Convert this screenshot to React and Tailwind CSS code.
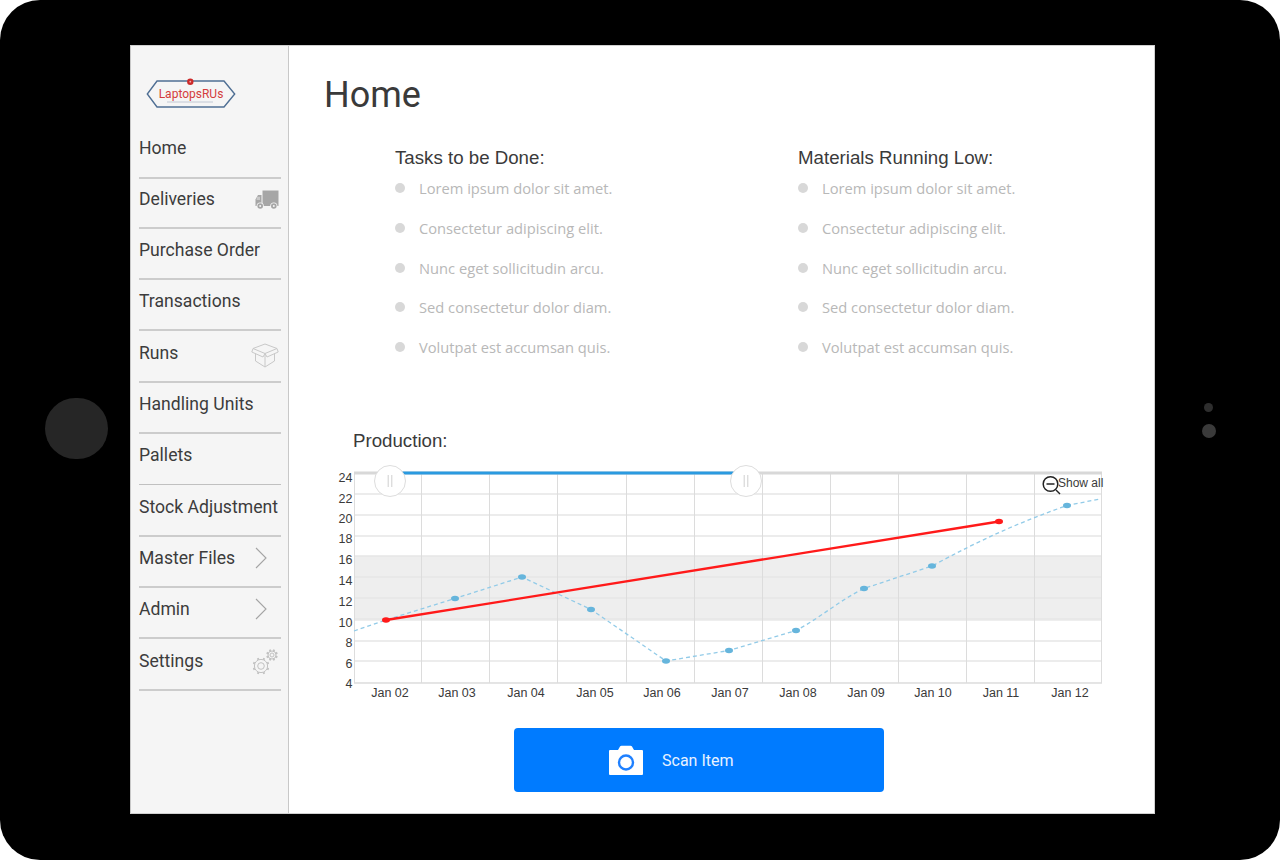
import React from "react";

const menuItems = [
  { label: "Home", h: "h-[51px]", pb: "pb-[9px]" },
  { label: "Deliveries", icon: "truck", h: "h-[50px]", pb: "pb-[7px]" },
  { label: "Purchase Order", h: "h-[51px]", pb: "pb-[7px]" },
  { label: "Transactions", h: "h-[51px]", pb: "pb-[7px]" },
  { label: "Runs", icon: "box", h: "h-[52px]", pb: "pb-[6px]" },
  { label: "Handling Units", h: "h-[51px]", pb: "pb-[7px]" },
  { label: "Pallets", h: "h-[51px]", pb: "pb-[7px]", thin: true },
  { label: "Stock Adjustment", h: "h-[52px]", pb: "pb-[6px]" },
  { label: "Master Files", icon: "chevron", h: "h-[51px]", pb: "pb-[7px]" },
  { label: "Admin", icon: "chevron", h: "h-[51px]", pb: "pb-[7px]" },
  { label: "Settings", icon: "gears", h: "h-[52px]", pb: "pb-[6px]" },
];

const lorem = [
  "Lorem ipsum dolor sit amet.",
  "Consectetur adipiscing elit.",
  "Nunc eget sollicitudin arcu.",
  "Sed consectetur dolor diam.",
  "Volutpat est accumsan quis.",
];

const Logo = () => (
  <svg width="90" height="32" viewBox="0 0 90 32" className="block">
    <path d="M11 3H78L88.7 16L78 29H11L1.3 16Z" fill="none" stroke="#4f6f94" strokeWidth="1.4" />
    <circle cx="44.3" cy="3.7" r="3.2" fill="#cc2a2a" />
    <circle cx="44.3" cy="3.7" r="0.9" fill="#f0b0b0" />
    <text x="45" y="20" textAnchor="middle" fontFamily="Roboto, sans-serif" fontSize="12" fill="#d43c3c">
      LaptopsRUs
    </text>
    <path d="M21 24H67" stroke="#b4bccb" strokeWidth="0.8" />
  </svg>
);

const TruckIcon = () => (
  <svg width="24" height="20" viewBox="0 0 24 20" className="block mt-[1px]">
    <path d="M7.5 0.5H23.5V16H7.5Z" fill="#a6a6a6" />
    <path d="M6.5 5H3L0.5 9.5V16H6.5Z" fill="#a6a6a6" />
    <path d="M2 6.8H5V10H1.5Z" fill="#c8c8c8" />
    <circle cx="5.2" cy="16" r="3.6" fill="#f5f5f5" />
    <circle cx="18.8" cy="16" r="3.6" fill="#f5f5f5" />
    <circle cx="5.2" cy="16" r="2.8" fill="#a6a6a6" />
    <circle cx="18.8" cy="16" r="2.8" fill="#a6a6a6" />
    <circle cx="5.2" cy="16" r="1" fill="#f5f5f5" />
    <circle cx="18.8" cy="16" r="1" fill="#f5f5f5" />
  </svg>
);

const BoxIcon = () => (
  <svg width="28" height="25" viewBox="0 0 28 25" fill="none" stroke="#c8c8c8" strokeWidth="1" className="block mt-[4px]">
    <path d="M14 1L26 5.5L14 10.5L2 5.5Z" />
    <path d="M2 5.5L0.8 9L12 14L14 10.5L16 14L27.2 9L26 5.5" />
    <path d="M4.5 10.5V18L14 24L23.5 18V10.5" />
    <path d="M14 10.5V24" />
  </svg>
);

const ChevronIcon = () => (
  <svg width="12" height="22" viewBox="0 0 12 22" fill="none" stroke="#a4a4a4" strokeWidth="1.1" className="block mr-[12px]">
    <path d="M1 1L11 11L1 21" />
  </svg>
);

const GearShape = ({ cx, cy, r, teeth = 8 }) => {
  const spokes = [];
  for (let i = 0; i < teeth; i++) {
    const a = (i / teeth) * Math.PI * 2 + Math.PI / 8;
    spokes.push(
      <line
        key={i}
        x1={cx + Math.cos(a) * r}
        y1={cy + Math.sin(a) * r}
        x2={cx + Math.cos(a) * (r + 1.8)}
        y2={cy + Math.sin(a) * (r + 1.8)}
        strokeWidth="2"
      />
    );
  }
  return (
    <g>
      <circle cx={cx} cy={cy} r={r} />
      <circle cx={cx} cy={cy} r={r * 0.5} />
      {spokes}
    </g>
  );
};

const GearsIcon = () => (
  <svg width="27" height="27" viewBox="0 0 27 27" fill="none" stroke="#c2c2c2" strokeWidth="1" className="block mt-[3px]">
    <GearShape cx={9} cy={17} r={6.6} />
    <GearShape cx={20} cy={6} r={4} />
  </svg>
);

const MenuIcon = ({ type }) => {
  if (type === "truck") return <TruckIcon />;
  if (type === "box") return <BoxIcon />;
  if (type === "gears") return <GearsIcon />;
  if (type === "chevron") return <ChevronIcon />;
  return null;
};

const ySteps = [24, 22, 20, 18, 16, 14, 12, 10, 8, 6, 4];
const gridYs = [473, 494, 515, 536, 556, 577, 598, 619, 641, 661, 683];
// the axis numbers don't sit exactly on their grid lines
const labelYs = [477, 498, 518, 538, 559, 580, 601, 622, 642, 663, 683];
const gridXs = [421, 489, 557, 626, 694, 762, 830, 898, 966, 1034];
const xLabels = [
  ["Jan 02", 390],
  ["Jan 03", 457],
  ["Jan 04", 526],
  ["Jan 05", 595],
  ["Jan 06", 662],
  ["Jan 07", 730],
  ["Jan 08", 798],
  ["Jan 09", 866],
  ["Jan 10", 933],
  ["Jan 11", 1001],
  ["Jan 12", 1070],
];
const points = [
  [455, 598.5],
  [522, 577],
  [591, 609.5],
  [666, 661],
  [729, 650.5],
  [796, 630.5],
  [864, 588.5],
  [932, 566],
  [1067, 505.5],
];

const ProductionChart = () => (
  // coords below are page coords, so the viewBox starts at the chart's corner
  <svg width="780" height="240" viewBox="330 465 780 240" className="block">
    <rect x="354" y="556" width="748" height="65" fill="#eeeeee" />
    {gridYs.map((y) => (
      <line key={y} x1="354" x2="1102" y1={y} y2={y} stroke="#e6e6e6" strokeWidth="1.4" />
    ))}
    {gridXs.map((x) => (
      <line key={x} x1={x + 0.5} x2={x + 0.5} y1="473" y2="683" stroke="#dcdcdc" strokeWidth="1" />
    ))}
    <line x1="354.5" x2="354.5" y1="473" y2="683" stroke="#dddddd" />
    <line x1="1101.5" x2="1101.5" y1="473" y2="683" stroke="#dddddd" />
    <line x1="354" x2="1102" y1="683" y2="683" stroke="#dddddd" />
    <line x1="354" x2="1102" y1="473" y2="473" stroke="#d8d8d8" strokeWidth="3" />
    <line x1="390" x2="747" y1="473" y2="473" stroke="#2a9ae0" strokeWidth="3" />

    {ySteps.map((v, i) => (
      <text key={v} x="352.5" y={labelYs[i] + 4.5} textAnchor="end" fontSize="12.5" fontFamily="'Liberation Sans', sans-serif" fill="#3a3a3a">
        {v}
      </text>
    ))}
    {xLabels.map(([t, x]) => (
      <text key={t} x={x} y="697" textAnchor="middle" fontSize="12.5" fontFamily="'Liberation Sans', sans-serif" fill="#3a3a3a">
        {t}
      </text>
    ))}

    <path
      d="M354 631L386 620L455 598.5L522 577L591 609.5L666 661L729 650.5L796 630.5C820 618 840 600 864 588.5L932 566C980 540 1020 522 1067 505.5L1100 499"
      fill="none"
      stroke="#92cbe8"
      strokeWidth="1.3"
      strokeDasharray="4 3"
    />
    {points.map(([x, y]) => (
      <ellipse key={x} cx={x} cy={y} rx="4" ry="2.7" fill="#66b5dc" />
    ))}

    <line x1="386" y1="620" x2="999" y2="521.5" stroke="#ff1a1a" strokeWidth="2.3" />
    <ellipse cx="386" cy="620" rx="4" ry="2.7" fill="#ff1a1a" />
    <ellipse cx="999" cy="521.5" rx="4" ry="2.7" fill="#ff1a1a" />

    {[390, 746].map((x) => (
      <g key={x}>
        <circle cx={x} cy="481" r="15.5" fill="#ffffff" stroke="#dddddd" />
        <line x1={x - 1.8} x2={x - 1.8} y1="475" y2="487" stroke="#cfcfcf" />
        <line x1={x + 1.8} x2={x + 1.8} y1="475" y2="487" stroke="#cfcfcf" />
      </g>
    ))}

    <circle cx="1050.5" cy="484" r="7.3" fill="none" stroke="#222222" strokeWidth="1.5" />
    <line x1="1046.5" x2="1054.5" y1="484" y2="484" stroke="#222222" strokeWidth="1.5" />
    <line x1="1056" y1="490" x2="1060" y2="494" stroke="#222222" strokeWidth="1.5" />
    <text x="1058" y="487" fontSize="12" fontFamily="'Liberation Sans', sans-serif" fill="#3a3a3a">
      Show all
    </text>
  </svg>
);

const TaskList = ({ title }) => (
  <div className="w-[403px] shrink-0">
    <h2 className="font-['Liberation_Sans',sans-serif] text-[18.7px] leading-[22px] text-[#3a3a3a]">{title}</h2>
    <ul className="mt-[9px] flex flex-col gap-[19.8px]">
      {lorem.map((t) => (
        <li key={t} className="flex items-center gap-[14px] h-[20px]">
          <span className="w-[10px] h-[10px] rounded-full bg-[#d8d8d8]" />
          <span className="font-['Open_Sans',sans-serif] text-[14.7px] leading-[20px] text-[#b8b8b8]">{t}</span>
        </li>
      ))}
    </ul>
  </div>
);

const CameraIcon = () => (
  <svg width="34" height="30" viewBox="0 0 34 30" className="block">
    <path d="M1 5H9L11 1.5Q11.4 0.8 12.5 0.8H21.5Q22.6 0.8 23 1.5L25 5H33Q34 5 34 6V29Q34 30 33 30H1Q0 30 0 29V6Q0 5 1 5Z" fill="#ffffff" />
    <circle cx="17" cy="17.5" r="7" fill="#ffffff" stroke="#1f80ff" strokeWidth="2.4" />
  </svg>
);

const App = () => {
  return (
    <div className="w-[1280px] h-[860px] bg-white overflow-hidden">
      <div className="w-full h-full bg-black rounded-[40px] flex">
        {/* home button */}
        <div className="w-[130px] flex items-center justify-center">
          <div className="w-[63px] h-[61px] rounded-full bg-[#262626] mt-[-4px] ml-[22px]" />
        </div>

        {/* screen */}
        <div className="w-[1025px] h-[769px] mt-[45px] bg-white flex border-t border-b border-r border-[#d0d0d0]">
          <aside className="w-[159px] h-full bg-[#f5f5f5] border-l border-r border-[#c8c8c8] pl-[8px] pr-[7px] shrink-0">
            <div className="h-[82px] pt-[32px] pl-[7px]">
              <Logo />
            </div>
            {menuItems.map((item) => (
              <div
                key={item.label}
                className={`${item.h} ${item.pb} ${item.thin ? "border-b border-[#c0c0c0]" : "border-b-2 border-[#cccccc]"} flex items-center justify-between pr-[2px] font-['Roboto',sans-serif] text-[17.6px] text-[#3c3c3c]`}
              >
                <span className="whitespace-nowrap">{item.label}</span>
                <MenuIcon type={item.icon} />
              </div>
            ))}
          </aside>

          <main className="flex-1 min-w-0">
            <h1 className="mt-[25px] ml-[35px] font-['Roboto',sans-serif] text-[36px] leading-[48px] text-[#3a3a3a]">Home</h1>
            <div className="flex ml-[106px] mt-[28px]">
              <TaskList title="Tasks to be Done:" />
              <TaskList title="Materials Running Low:" />
            </div>
            <h2 className="ml-[64px] mt-[73px] font-['Liberation_Sans',sans-serif] text-[18.7px] leading-[22px] text-[#3a3a3a]">Production:</h2>
            <div className="ml-[41px] mt-[13px]">
              <ProductionChart />
            </div>
            <button className="ml-[225px] mt-[23px] w-[370px] h-[64px] bg-[#007bff] rounded-[4px] flex items-center">
              <span className="ml-[95px]">
                <CameraIcon />
              </span>
              <span className="ml-[19px] mt-[2px] font-['Roboto',sans-serif] text-[16px] text-[#e8f2ff]">Scan Item</span>
            </button>
          </main>
        </div>

        {/* camera dots */}
        <div className="flex-1 flex flex-col items-center justify-center gap-[12px] pr-[18px] mt-[-19px]">
          <div className="w-[9px] h-[9px] rounded-full bg-[#2e2e2e]" />
          <div className="w-[14px] h-[14px] rounded-full bg-[#3a3a3a]" />
        </div>
      </div>
    </div>
  );
};

export default App;
